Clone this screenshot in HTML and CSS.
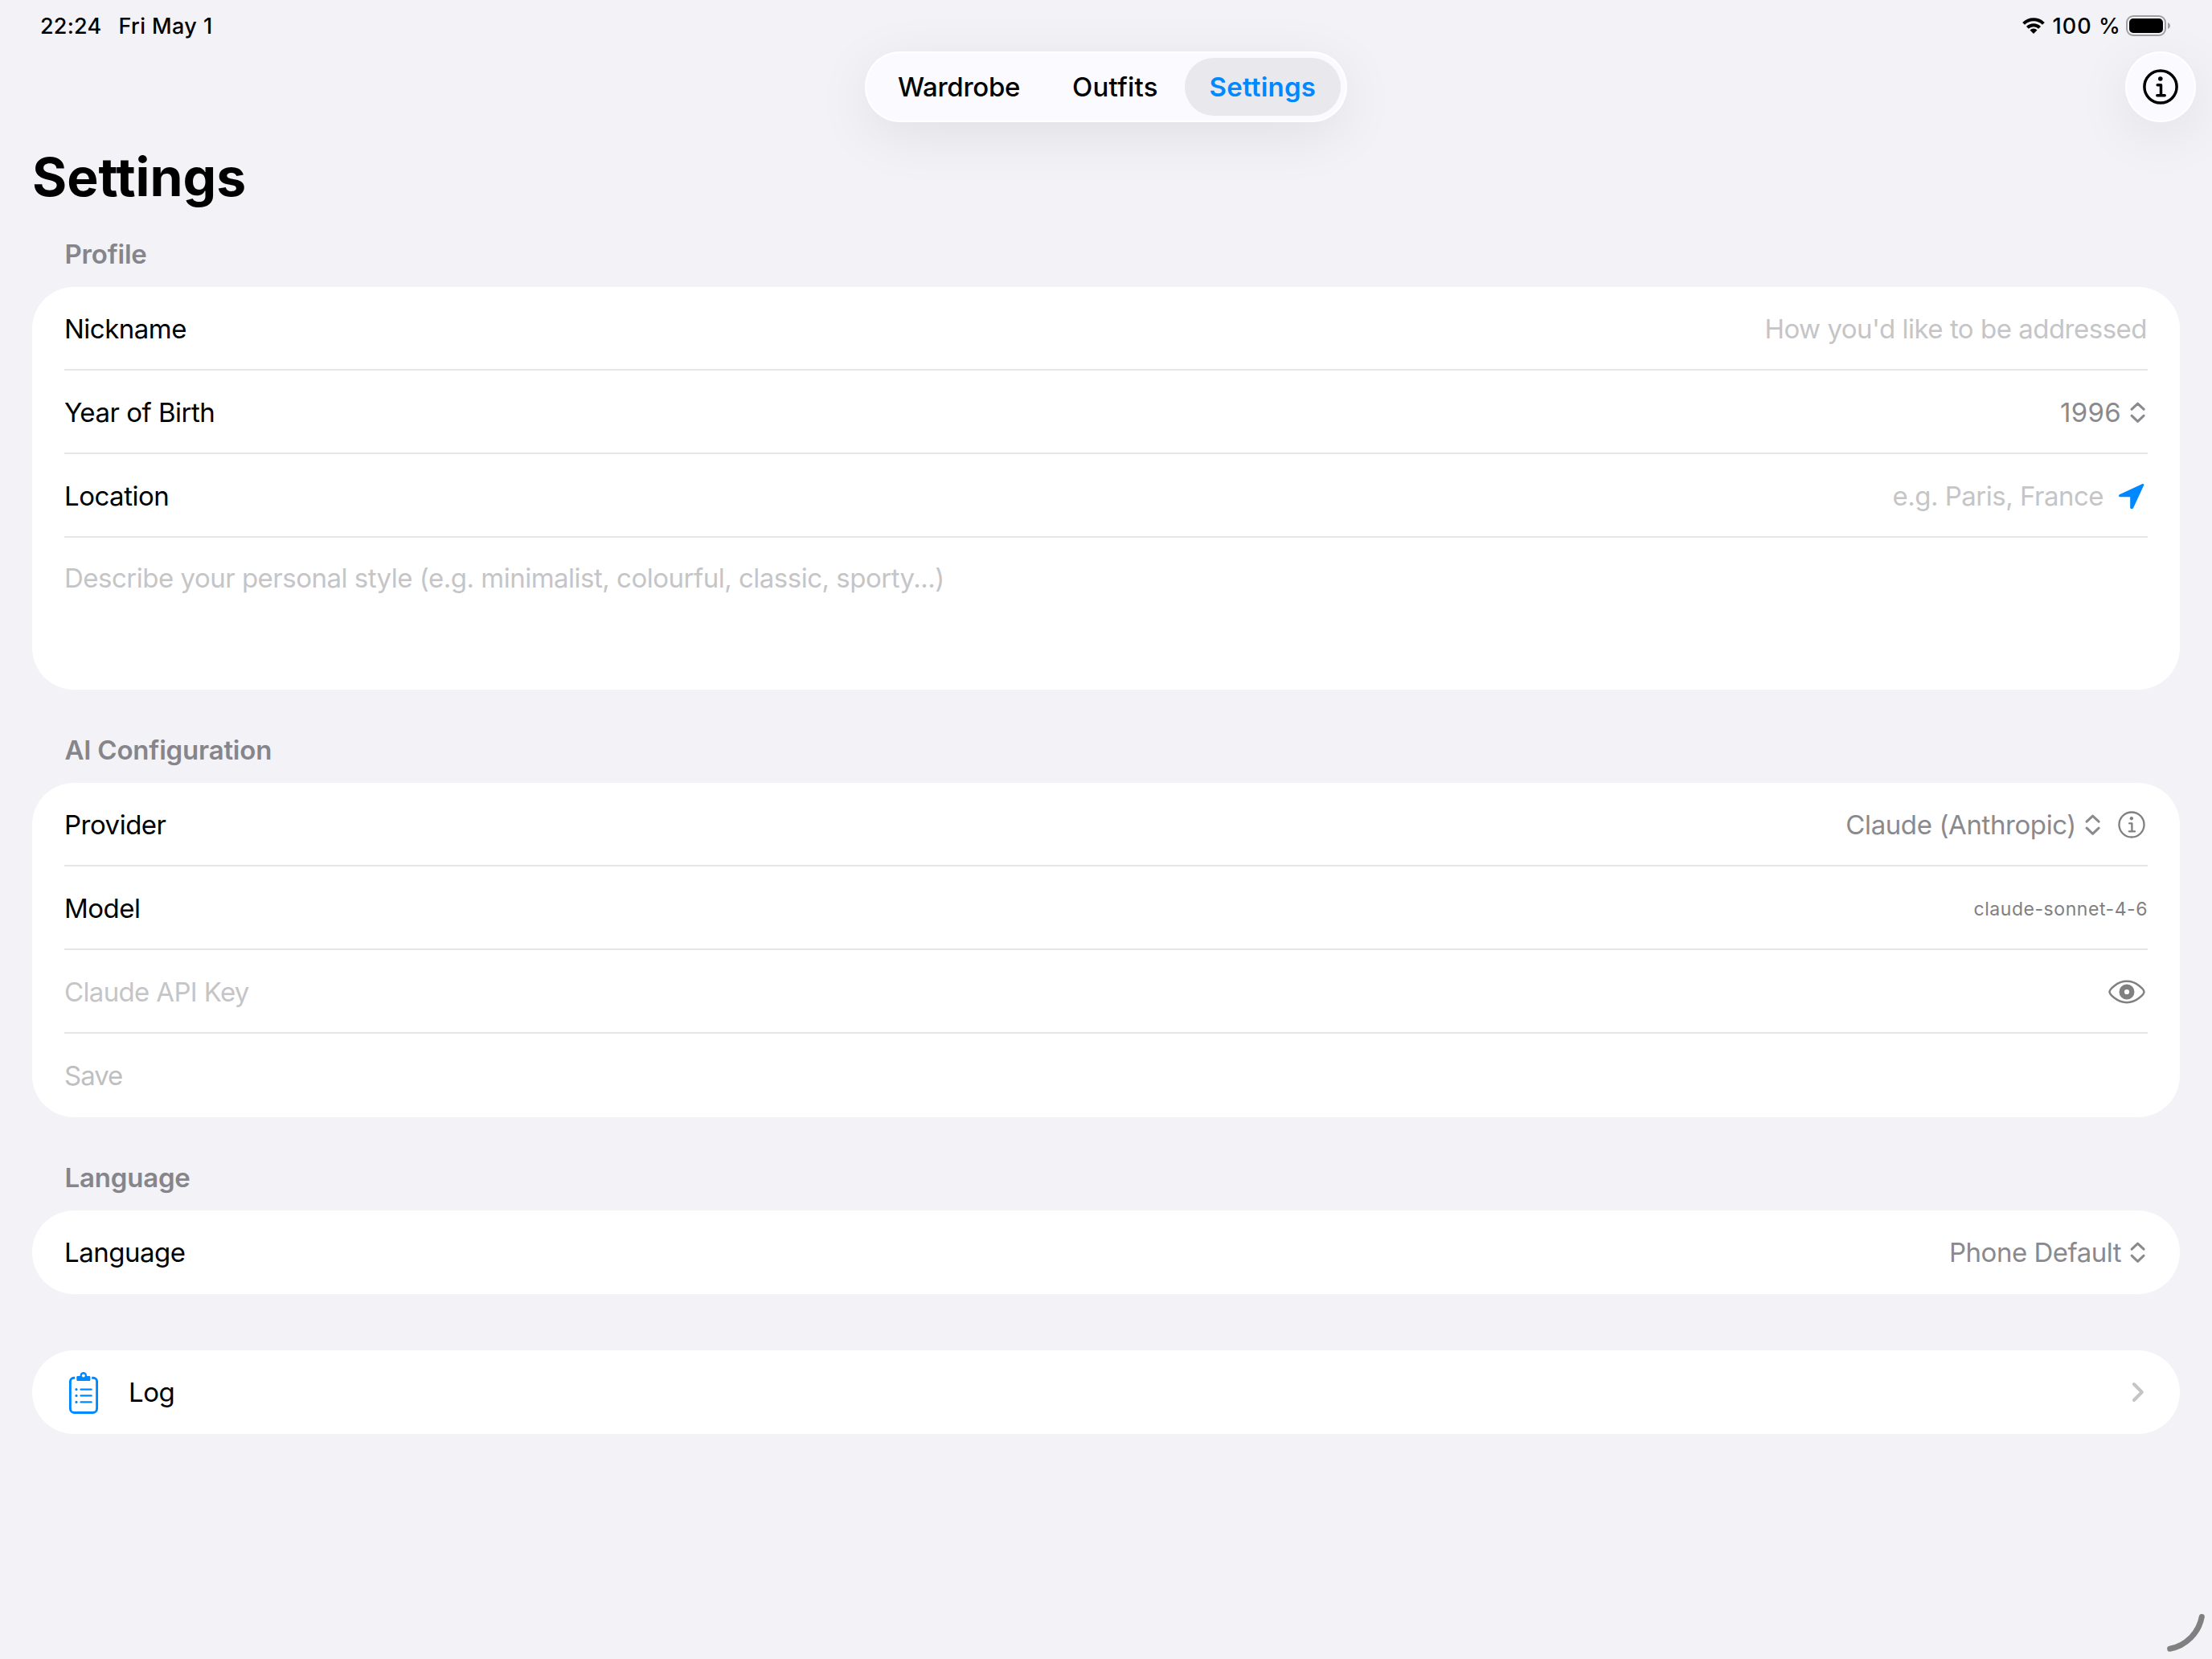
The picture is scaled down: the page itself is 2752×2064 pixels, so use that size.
FILE: index.html
```
<!DOCTYPE html>
<html lang="en">
<head>
    <meta charset="UTF-8">
    <meta name="viewport" content="width=device-width, initial-scale=1.0">
    <title>Settings</title>
    <link rel="stylesheet" href="styles.css">
</head>
<body>
    <!-- shared icons -->
    <svg class="sprite">
        <symbol id="info" viewBox="0 0 44 44">
            <circle cx="22" cy="22" r="20.1"/>
            <path d="M18.2 19.8h4.3v13M17.8 32.8h9.4" stroke-linecap="round" stroke-linejoin="round"/>
            <circle cx="21.8" cy="12" r="2.8" fill="currentColor" stroke="none"/>
        </symbol>
        <symbol id="updown" viewBox="0 0 24 28">
            <path d="M4.1 10.2l7.5-7.1 7.5 7.1M4.1 18.2l7.5 7.1 7.5-7.1"/>
        </symbol>
    </svg>

    <div class="status-bar">
        <span class="time">22:24</span>
        <span class="date">Fri May 1</span>
        <svg class="wifi" viewBox="0 0 30 22">
            <path d="M2.6 8.4a17.3 17.3 0 0 1 24.8 0M7.4 13.3a10.7 10.7 0 0 1 15.2 0" fill="none" stroke="#000" stroke-width="4"/>
            <path d="M15 21l-4.5-4.5a6.2 6.2 0 0 1 9 0z"/>
        </svg>
        <span class="percent">100 %</span>
        <svg class="battery" viewBox="0 0 56 26">
            <rect x="1" y="1" width="48" height="24" rx="8" fill="none" stroke="#a0a0a3" stroke-width="2"/>
            <rect x="4" y="4" width="42" height="18" rx="5"/>
            <path d="M52 9c4 1.5 4 6.5 0 8z" fill="#a0a0a3"/>
        </svg>
    </div>

    <nav class="toolbar">
        <div class="tabs">
            <a class="tab wardrobe">Wardrobe</a>
            <a class="tab">Outfits</a>
            <a class="tab active">Settings</a>
        </div>
        <div class="round-button">
            <svg class="icon-info"><use href="#info"/></svg>
        </div>
    </nav>

    <main>
        <h1>Settings</h1>

        <h2>Profile</h2>
        <div class="card">
            <div class="row">
                <span>Nickname</span>
                <span class="value placeholder nickname">How you'd like to be addressed</span>
            </div>
            <div class="row">
                <span>Year of Birth</span>
                <span class="value year">1996</span>
                <svg class="updown"><use href="#updown"/></svg>
            </div>
            <div class="row">
                <span>Location</span>
                <span class="value placeholder">e.g. Paris, France</span>
                <svg class="arrow" viewBox="0 0 36 36">
                    <path d="M32 4.3L3.4 17.4V18H17.5V32.6H18.8Z"/>
                </svg>
            </div>
            <div class="row style-text placeholder">Describe your personal style (e.g. minimalist, colourful, classic, sporty...)</div>
        </div>

        <h2>AI Configuration</h2>
        <div class="card">
            <div class="row">
                <span>Provider</span>
                <span class="value provider">Claude (Anthropic)</span>
                <svg class="updown"><use href="#updown"/></svg>
                <svg class="icon-info small"><use href="#info"/></svg>
            </div>
            <div class="row">
                <span>Model</span>
                <span class="value model">claude-sonnet-4-6</span>
            </div>
            <div class="row">
                <span class="placeholder api-key">Claude API Key</span>
                <svg class="eye" viewBox="0 0 46 30">
                    <path d="M1.5 15C1.5 12.5 10.5 1.7 23 1.7S44.5 12.5 44.5 15 35.5 28.3 23 28.3 1.5 17.5 1.5 15z" stroke-width="2.5"/>
                    <circle cx="23" cy="15" r="6.3" stroke-width="6.4"/>
                </svg>
            </div>
            <div class="row">
                <span class="save">Save</span>
            </div>
        </div>

        <h2>Language</h2>
        <div class="card">
            <div class="row">
                <span>Language</span>
                <span class="value">Phone Default</span>
                <svg class="updown"><use href="#updown"/></svg>
            </div>
        </div>

        <div class="card log">
            <div class="row">
                <svg class="clipboard" viewBox="0 0 40 54">
                    <path d="M9.2 9.2H8a4.6 4.6 0 0 0-4.6 4.6V47.5a5 5 0 0 0 5 5h23.200a5 5 0 0 0 5-5V13.800a4.600 4.600 0 0 0-4.600-4.600h-1.800" fill="none" stroke="#08f" stroke-width="2.9"/>
                    <path d="M12.500 7H16a4.200 4.200 0 0 1 7.800 0h3.400q1.200 0 1.200 1.200v3.600q0 1.200-1.200 1.200H12.500q-1.200 0-1.200-1.200V8.200q0-1.200 1.200-1.200z" fill="#08f"/>
                    <circle cx="19.8" cy="6.3" r="4.2" fill="#08f"/>
                    <circle cx="19.8" cy="6.5" r="1.9" fill="#fff"/>
                    <path d="M16.5 23.7h13.2M16.5 31.4h13.2M16.5 39.4h13.2" stroke="#08f" stroke-width="2.2" stroke-linecap="round"/>
                    <path d="M11 23.7h0M11 31.4h0M11 39.4h0" stroke="#08f" stroke-width="3.2" stroke-linecap="round"/>
                </svg>
                <span>Log</span>
                <svg class="chevron" viewBox="0 0 24 26"><path d="M6.9 3l9.9 10-9.9 10"/></svg>
            </div>
        </div>
    </main>

    <svg class="corner" viewBox="0 0 56 56"><path d="M47.3 7.5A50 50 0 0 1 7.7 47.3"/></svg>
</body>
</html>
```

FILE: styles.css
```
* {
    box-sizing: border-box;
}

body {
    margin: 0;
    height: 2064px;
    overflow: hidden;
    position: relative;
    background-color: #f2f2f7;
    color: #000;
    font-family: Inter, "Liberation Sans", sans-serif;
    font-size: 33px;
}

svg {
    display: block;
    flex: none;
}

.sprite {
    display: none;
}

/* status bar */
.status-bar {
    display: flex;
    align-items: center;
    height: 64px;
    padding: 0 51px 0 50px;
    font-size: 27px;
    font-weight: 500;
}

.time {
    letter-spacing: 0.2px;
}

.date {
    margin-left: 21px;
    letter-spacing: 0.4px;
}

.wifi {
    width: 30px;
    height: 22px;
    margin-left: auto;
}

.percent {
    margin: 0 6px 0 8px;
    letter-spacing: 1.1px;
}

.battery {
    width: 56px;
    height: 26px;
}

/* top navigation */
.toolbar {
    display: grid;
    grid-template-columns: 1fr auto 1fr;
    height: 88px;
    padding: 0 20px;
}

.tabs {
    grid-column: 2;
    display: flex;
    gap: 3px;
    width: 600px;
    padding: 8px 8px 8px 10px;
    border-radius: 44px;
}

.tabs,
.round-button {
    background-color: #fbfaff;
    box-shadow: inset 0 0 0 2px #fff, 0 16px 70px rgba(0, 0, 0, 0.08);
}

.tab {
    padding: 0 31px;
    border-radius: 36px;
    line-height: 72px;
    font-weight: 500;
    letter-spacing: 0.2px;
}

.wardrobe {
    letter-spacing: -0.3px;
}

.active {
    margin-left: -1px;
    background-color: #e9e8ed;
    color: #0088ff;
    font-weight: 600;
}

.round-button {
    justify-self: end;
    display: flex;
    align-items: center;
    justify-content: center;
    width: 88px;
    height: 88px;
    border-radius: 50%;
}

.icon-info {
    width: 44px;
    height: 44px;
    fill: none;
    stroke: currentColor;
    stroke-width: 3.5;
}

.small {
    width: 34px;
    height: 34px;
    margin: 0 3px 0 19px;
    color: #808080;
    stroke-width: 3;
}

/* content */
main {
    padding: 0 40px;
}

h1 {
    margin: 0;
    font-size: 66px;
    line-height: 136px;
    font-weight: 700;
}

h2 {
    margin: 55px 0 21px 40.5px;
    font-size: 33px;
    line-height: 40px;
    font-weight: 600;
    letter-spacing: -0.2px;
    color: #85858b;
}

h1 + h2 {
    margin-top: 8px;
}

.card {
    padding: 0 40px;
    border-radius: 52px;
    background-color: #fff;
}

.row {
    display: flex;
    align-items: center;
    height: 104px;
    letter-spacing: -0.5px;
    box-shadow: inset 0 -2px #e6e6e6;
}

.row:last-child {
    box-shadow: none;
}

.style-text {
    display: block;
    height: 189px;
    line-height: 100px;
}

.value {
    margin-left: auto;
    color: #8a8a8e;
}

.placeholder {
    color: #c5c5c7;
}

.nickname {
    margin-right: 1px;
}

.provider {
    letter-spacing: -0.4px;
}

.api-key {
    letter-spacing: -0.65px;
}

.save {
    color: #bfbfbf;
    letter-spacing: -1px;
}

.year {
    letter-spacing: 0.3px;
}

.model {
    padding-top: 1px;
    font-size: 23px;
    letter-spacing: 0.55px;
    color: #808080;
}

.updown {
    width: 24px;
    height: 28px;
    margin-left: 9px;
    fill: none;
    stroke: #8a8a8e;
    stroke-width: 3;
    stroke-linecap: round;
    stroke-linejoin: round;
}

.arrow {
    width: 36px;
    height: 36px;
    margin: 0 2px 0 17px;
    fill: #0088ff;
    stroke: #0088ff;
    stroke-width: 2.6;
    stroke-linejoin: round;
}

.eye {
    width: 46px;
    height: 30px;
    margin: 0 3px 0 auto;
    fill: none;
    stroke: #808080;
}

.log {
    margin-top: 70px;
}

.clipboard {
    width: 40px;
    height: 54px;
    margin: 0 36px 0 4px;
    overflow: visible;
}

.chevron {
    width: 24px;
    height: 26px;
    margin-left: auto;
    fill: none;
    stroke: #c5c5c7;
    stroke-width: 4;
    stroke-linecap: round;
    stroke-linejoin: round;
}

/* resize handle over the window corner */
.corner {
    position: absolute;
    right: 4px;
    bottom: 4px;
    width: 56px;
    height: 56px;
    fill: none;
    stroke: #808080;
    stroke-width: 7;
    stroke-linecap: round;
}
```
